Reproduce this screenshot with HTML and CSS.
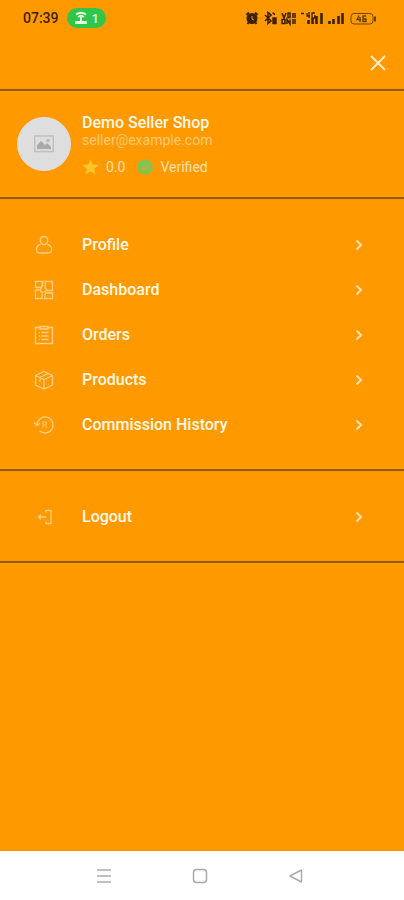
FILE: index.html
```html
<!DOCTYPE html>
<html lang="en">
<head>
<meta charset="utf-8">
<meta name="viewport" content="width=device-width, initial-scale=1">
<title>Seller menu</title>
<link rel="stylesheet" href="styles.css">
</head>
<body>
<div class="screen">
  <header class="status">
    <span class="clock">07:39</span>
    <span class="hotspot">
      <svg width="14" height="14" viewBox="0 0 14 14" fill="none" stroke="currentColor" stroke-width="2"><path d="M2 3.500Q7 0 12 3.500M4 6Q7 3.500 10 6"/><path d="M7 6v4"/><path d="M1 13v-2q0-1 1-1h10q1 0 1 1v2z" fill="currentColor" stroke="none"/></svg>
      <span>1</span>
    </span>
    <span class="indicators">
      <svg width="132" height="16" viewBox="0 0 132 16" fill="none" stroke="currentColor">
        <circle cx="8" cy="8.500" r="5.500" fill="currentColor" stroke="none"/>
        <path d="M2.500 5l2.500-2.500M13.500 5L11 2.500M4.500 12.500L3.500 14M11.500 12.500l1 1.500" stroke-width="2"/>
        <path d="M8 6v3l2 1" stroke="#ff9900"/>
        <path d="M21 5l6 6-3 2.500v-11L27 5l-6 6" stroke-width="1.600"/>
        <path d="M28.500 3q2 0 2 2M29 8v5.500h3V8z" fill="currentColor" stroke-width="1.400"/>
        <path d="M38 3l2 5 2-5M44 3h2v4.500h-2zM49 3v5M51 3v5M38 9.500v4h3v-4zM43 14V9.500l3 4.500V9.500M49 9v5M51 9v5" stroke-width="1.500"/>
        <path d="M57 3.500h3M63 3v3h3M65 2v6M71 3h-3v5h3V6h-1" stroke-width="1.300"/>
        <path d="M64.500 10v4M68.500 8v6M72.500 6v8M77.500 3v11M85.500 11v3M89.500 9v5M94.500 6v8M98.500 3v11" stroke-width="2.600"/>
        <rect x="107" y="3.500" width="22" height="10.500" rx="3" stroke-opacity=".7"/>
        <path d="M131 6.500v5" stroke-width="1.500"/>
        <path d="M115 5.500l-2 4h4M116 7v5M122 6h-3v5.500h3V9h-3" stroke-opacity=".8" stroke-width="1.300"/>
      </svg>
    </span>
  </header>
  <div class="toolbar">
    <button class="close" aria-label="Close"><svg width="16" height="16" viewBox="0 0 16 16" fill="none" stroke="currentColor" stroke-width="2"><path d="M1 1l14 14M15 1L1 15"/></svg></button>
  </div>
  <section class="account">
    <div class="avatar">
      <svg width="20" height="18" viewBox="0 0 20 18"><rect x=".75" y="1" width="18.500" height="15.500" fill="none" stroke="#c0c0c0" stroke-width="1.500"/><path d="M3 14V10l4-4 4 4 2-2 4 4v2z" fill="#aaa"/><circle cx="14" cy="5.500" r="1.800" fill="#bbb"/></svg>
    </div>
    <div class="details">
      <h1 class="name">Demo Seller Shop</h1>
      <p class="email">seller@example.com</p>
      <div class="badges">
        <svg width="17" height="16" viewBox="0 0 16 16"><path d="M8 0l2.300 5.400 5.700.5-4.300 3.800L13 15.500l-5-3-5 3 1.300-5.800L0 5.900l5.700-.5z" fill="#ffc62b"/></svg>
        <span class="rating">0.0</span>
        <svg width="16" height="16" viewBox="0 0 16 16"><path d="M8 0l2 1.200 2.500.3 1.200 2.200L16 6l-.5 2 .5 2.500-2.300 1.500-1.200 2.500-2.500.3L8 16l-2-1.200-2.500-.3-1.200-2.500L0 10.500.5 8 0 6l2.300-2.300 1.200-2.200L6 1.200z" fill="#7cc654"/><path d="M4.500 8.200L7 10.500l4.500-4.700" fill="none" stroke="#e8a020" stroke-width="1.800"/></svg>
        <span>Verified</span>
      </div>
    </div>
  </section>
  <nav class="menu" aria-label="Seller">
    <a class="item" href="#profile">
      <svg class="icon" viewBox="0 0 20 20"><path d="M10 1.500c-2.200 0-3.700 1.600-3.700 3.800S7.800 9.500 10 9.500s3.700-2 3.700-4.200S12.200 1.500 10 1.500zM6.500 9.500C4 10 2.500 12 2.500 14.500q0 3.500 3 3.500h9q3 0 3-3.500c0-2.500-1.500-4.500-4-5"/></svg>
      <span class="label">Profile</span>
      <svg class="chevron" viewBox="0 0 8 12"><path d="M1.500 1.500L6 6l-4.500 4.500"/></svg>
    </a>
    <a class="item" href="#dashboard">
      <svg class="icon" viewBox="0 0 20 20"><path d="M1.500 1.500H9L7.500 7.500h-6zM11.500 1.500h7v9h-5L11 8zM1.500 10h4.500l2 2.500v6H1.500zM11.500 13h7v5.500h-8zM6 10l3-5M8 12.500l5.500-2"/></svg>
      <span class="label">Dashboard</span>
      <svg class="chevron" viewBox="0 0 8 12"><path d="M1.500 1.500L6 6l-4.500 4.500"/></svg>
    </a>
    <a class="item" href="#orders">
      <svg class="icon" viewBox="0 0 20 20"><path d="M5.500 2.500h-4v16h17v-16h-4M6 1.500h8v2.500H6zM7.500 7.500h7M7.500 11h7M7.500 14.500h7M5 7.500h1M5 11h1M5 14.500h1"/></svg>
      <span class="label">Orders</span>
      <svg class="chevron" viewBox="0 0 8 12"><path d="M1.500 1.500L6 6l-4.500 4.500"/></svg>
    </a>
    <a class="item" href="#products">
      <svg class="icon" viewBox="0 0 20 20"><path d="M10 1.500l8.500 4v9.500L10 19l-8.500-4V5.500zM1.500 5.500L10 9.500l8.500-4M10 9.500V19M14 3.500L6 7.500V12"/></svg>
      <span class="label">Products</span>
      <svg class="chevron" viewBox="0 0 8 12"><path d="M1.500 1.500L6 6l-4.500 4.500"/></svg>
    </a>
    <a class="item" href="#commission">
      <svg class="icon" viewBox="0 0 20 20"><path d="M3 10a8 8 0 1 1 2.500 5.800M0 7.500L3 10.500l3-2.500"/><path d="M9 13V7h2q1.500 0 1.500 1.500T11 10H9M11 10l2 3" stroke-opacity=".7"/></svg>
      <span class="label">Commission History</span>
      <svg class="chevron" viewBox="0 0 8 12"><path d="M1.500 1.500L6 6l-4.500 4.500"/></svg>
    </a>
  </nav>
  <div class="menu">
    <a class="item" href="#logout">
      <svg class="icon" viewBox="0 0 20 20"><path d="M12 5.500v-2h5v13h-5v-2M12 10H4.500M7 7.500L4.500 10 7 12.500"/></svg>
      <span class="label">Logout</span>
      <svg class="chevron" viewBox="0 0 8 12"><path d="M1.500 1.500L6 6l-4.500 4.500"/></svg>
    </a>
  </div>
  <footer class="system">
    <button aria-label="Recent apps"><svg width="16" height="16" viewBox="0 0 16 16"><path d="M1 2h14M1 8h14M1 14h14"/></svg></button>
    <button aria-label="Home"><svg width="16" height="16" viewBox="0 0 16 16"><rect x="1.500" y="1.500" width="13" height="13" rx="3"/></svg></button>
    <button aria-label="Back"><svg width="16" height="16" viewBox="0 0 16 16"><path d="M13.500 2v12L2 8z" stroke-linejoin="round"/></svg></button>
  </footer>
</div>
</body>
</html>
```
FILE: styles.css
```css
* {
  box-sizing: border-box;
}

body {
  margin: 0;
  background: #ff9900;
  color: #fff8e8;
  font-family: Roboto, "Liberation Sans", sans-serif;
}

svg {
  display: block;
  flex: none;
}

button {
  display: flex;
  align-items: center;
  justify-content: center;
  padding: 0;
  border: 0;
  background: none;
  color: inherit;
}

.screen {
  display: flex;
  flex-direction: column;
  min-height: 100vh;
}

.status {
  display: flex;
  align-items: center;
  gap: 8px;
  height: 36px;
  padding: 0 28px 0 23px;
  color: #3a2200;
}

.clock {
  font-size: 14px;
  font-weight: 500;
}

.hotspot {
  display: flex;
  align-items: center;
  gap: 4px;
  height: 20px;
  padding: 0 7px;
  border-radius: 10px;
  background: #2fc74a;
  color: #e4fbe0;
  font-size: 13px;
  font-weight: 500;
}

.indicators {
  margin-left: auto;
}

.toolbar {
  display: flex;
  justify-content: flex-end;
  height: 53px;
  padding: 11px 10px;
}

.close {
  width: 32px;
  height: 32px;
  color: #ffecc8;
}

.account {
  display: flex;
  align-items: center;
  gap: 11px;
  height: 108px;
  padding: 0 17px;
  border-top: 2px solid #945a08;
}

.avatar {
  display: flex;
  align-items: center;
  justify-content: center;
  width: 54px;
  height: 54px;
  border-radius: 50%;
  background: #dedede;
}

.name,
.email {
  margin: 0;
  font-size: 16px;
  font-weight: 500;
  line-height: 18px;
}

.email {
  color: #ffc978;
  font-size: 14px;
  font-weight: 400;
  line-height: 16px;
}

.badges {
  display: flex;
  align-items: center;
  gap: 7px;
  margin-top: 11px;
  color: #ffe0b0;
  font-size: 14px;
  line-height: 16px;
}

.rating {
  margin-right: 5px;
}

.menu {
  padding: 23px 41px 22px 34px;
  border-top: 2px solid #945a08;
}

.menu:not(nav) {
  border-bottom: 2px solid #945a08;
}

.item {
  display: flex;
  align-items: center;
  height: 45px;
  color: inherit;
  font-size: 16px;
  font-weight: 500;
  text-decoration: none;
}

.icon {
  width: 20px;
  height: 20px;
  fill: none;
  stroke: #ffcf85;
  stroke-width: 1.3;
}

.label {
  flex: 1;
  margin-left: 28px;
}

.chevron {
  width: 8px;
  height: 12px;
  fill: none;
  stroke: #ffe0b0;
  stroke-width: 2;
}

.system {
  display: flex;
  align-items: center;
  justify-content: center;
  gap: 80px;
  height: 49px;
  padding-right: 4px;
  margin-top: auto;
  background: #fff;
}

.system svg {
  fill: none;
  stroke: #aaa;
  stroke-width: 1.5;
}
```
